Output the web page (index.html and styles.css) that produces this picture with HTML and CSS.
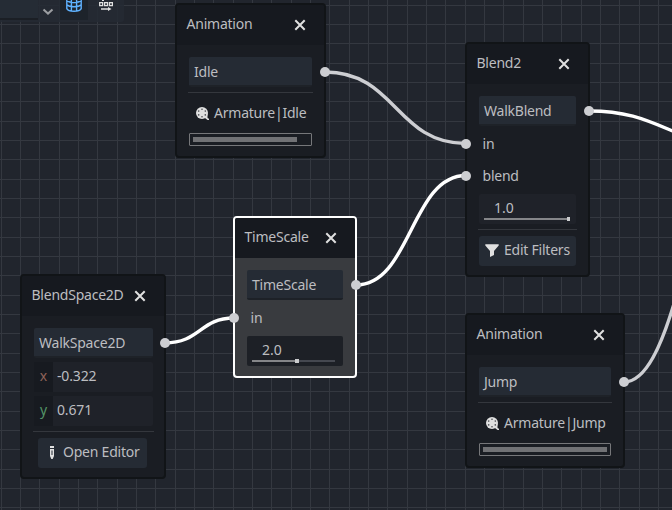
FILE: index.html
```
<!DOCTYPE html>
<html lang="en">
<head>
<meta charset="utf-8">
<title>AnimationTree</title>
<link rel="stylesheet" href="styles.css">
</head>
<body>
<svg class="defs" width="0" height="0">
  <defs>
    <symbol id="close" viewBox="0 0 12 12"><path d="M1.300 1.300 10.700 10.700M10.700 1.300 1.300 10.700" fill="none" stroke="#e0e0e0" stroke-width="2"/></symbol>
    <symbol id="reel" viewBox="0 0 13 13">
      <circle cx="6" cy="6" r="6" fill="#e0e0e0"/>
      <path d="M8.500 9.500 11.500 7v4l1.500 .8V13H11.500L9 11z" fill="#e0e0e0"/>
      <g fill="#4a4c51"><circle cx="6" cy="2.200" r=".8"/><circle cx="6" cy="9.800" r=".8"/><circle cx="2.700" cy="4.100" r=".8"/><circle cx="9.300" cy="4.100" r=".8"/><circle cx="2.700" cy="7.900" r=".8"/><circle cx="9.300" cy="7.900" r=".8"/></g>
    </symbol>
  </defs>
</svg>
<main class="graph">
  <div class="toolbar">
    <div class="path-field"></div>
    <svg class="chevron" width="12" height="8" viewBox="0 0 12 8"><path d="M1.500 1.500 6 5.600 10.500 1.500" fill="none" stroke="#9b9da1" stroke-width="2"/></svg>
    <div class="tool selected">
      <svg width="16" height="14" viewBox="0 0 16 14"><g fill="none" stroke="#5fb2ff" stroke-width="1.4"><path d="M.8 -2V8.600Q2 11.200 8 11.200T15.200 8.600V-2M5.400 -2V10.500M10.600 -2V10.500M.8 .6Q3 2.600 8 2.600T15.200 .6M.8 4.800Q3 6.800 8 6.800T15.200 4.800"/></g></svg>
    </div>
    <svg class="snap" width="14" height="12" viewBox="0 0 14 12"><g fill="none" stroke="#e0e0e0" stroke-width="1.3"><path d="M.7 2.700h2.900v2.900H.7zM5.600 2.700h2.900v2.900H5.600zM10.500 2.700h2.900v2.900h-2.900z"/></g><path d="M3 0h2v1H3zM2 8.200h7V7l3.500 2L9 11V9.800H2z" fill="#e0e0e0"/></svg>
  </div>

  <svg class="wires" width="672" height="510" viewBox="0 0 672 510">
    <g fill="none" stroke-width="3.4">
      <path stroke="#cdced2" d="M325 72C396 72 396 143.500 466 143.500"/>
      <path stroke="#fff" d="M356 285C411 285 411 175.500 466 175.500"/>
      <path stroke="#fff" d="M165 343C200 343 200 318 234 318"/>
      <path stroke="#fff" d="M589 111C635 111 653 124 690 138"/>
      <path stroke="#cdced2" d="M624 382C646 382 662 345 676 297"/>
    </g>
  </svg>

  <section class="node idle">
    <header><span>Animation</span><svg class="x"><use href="#close"/></svg></header>
    <div class="body">
      <div class="field">Idle</div>
      <hr>
      <div class="clip"><svg class="reel"><use href="#reel"/></svg>Armature|Idle</div>
      <div class="progress"><i></i></div>
    </div>
    <b class="port out"></b>
  </section>

  <section class="node blend">
    <header><span>Blend2</span><svg class="x"><use href="#close"/></svg></header>
    <div class="body">
      <div class="field">WalkBlend</div>
      <div class="slot first">in</div>
      <div class="slot">blend</div>
      <div class="spin full">1.0<div class="track"><i></i></div></div>
      <hr>
      <div class="button"><svg width="14" height="13" viewBox="0 0 14 13"><path d="M.3 .3H13.700V1.500L9 7V11L5 13V7L.3 1.500z" fill="#e0e0e0"/></svg><span>Edit Filters</span></div>
    </div>
    <b class="port in"></b><b class="port in2"></b><b class="port out"></b>
  </section>

  <section class="node scale">
    <header><span>TimeScale</span><svg class="x"><use href="#close"/></svg></header>
    <div class="body">
      <div class="field">TimeScale</div>
      <div class="slot">in</div>
      <div class="spin half">2.0<div class="track"><i></i></div></div>
    </div>
    <b class="port in"></b><b class="port out"></b>
  </section>

  <section class="node space">
    <header><span>BlendSpace2D</span><svg class="x"><use href="#close"/></svg></header>
    <div class="body">
      <div class="field">WalkSpace2D</div>
      <div class="axis"><span class="ax">x</span>-0.322</div>
      <div class="axis"><span class="ay">y</span>0.671</div>
      <hr>
      <div class="button open"><svg width="4" height="13" viewBox="0 0 4 13"><path d="M0 0h4v2H0zM0 3h4v7L2.700 13H1.300L0 10z" fill="#e0e0e0"/><path d="M1.500 4.500h1V9h-1z" fill="#252b34"/></svg><span>Open Editor</span></div>
    </div>
    <b class="port out"></b>
  </section>

  <section class="node jump">
    <header><span>Animation</span><svg class="x"><use href="#close"/></svg></header>
    <div class="body">
      <div class="field">Jump</div>
      <hr>
      <div class="clip"><svg class="reel"><use href="#reel"/></svg>Armature|Jump</div>
      <div class="progress done"><i></i></div>
    </div>
    <b class="port out"></b>
  </section>
</main>
</body>
</html>
```
FILE: styles.css
```
* { box-sizing: border-box; }
body { margin: 0; font: 14px/20px "Noto Sans", sans-serif; letter-spacing: -.23px; color: #bcbdc0; }
.defs { position: absolute; }
.graph {
  --g: #343840;
  position: relative;
  width: 672px;
  height: 510px;
  overflow: hidden;
  background-color: #21252d;
  background-image:
    linear-gradient(90deg, var(--g) 1px, transparent 1px, transparent 19px, var(--g) 19px, var(--g) 20px, transparent 20px, transparent 38px, var(--g) 38px, var(--g) 39px, transparent 39px),
    linear-gradient(var(--g) 1px, transparent 1px, transparent 19px, var(--g) 19px, var(--g) 20px, transparent 20px, transparent 38px, var(--g) 38px, var(--g) 39px, transparent 39px);
  background-size: 58px 58px;
  background-position: 1px 5px;
}
.wires { position: absolute; inset: 0; }

.toolbar { display: flex; align-items: flex-start; width: 124px; height: 22px; background: rgba(36, 42, 51, .88); border-radius: 0 0 3px 0; }
.toolbar > * { flex: none; }
.path-field { width: 38px; height: 20px; background: #252c35; border-bottom: 2px solid #1b1f25; }
.chevron { margin: 8px 0 0 4px; }
.tool { display: flex; justify-content: center; width: 28px; height: 20px; margin-left: 6px; }
.selected { background: #1d232b; }
.snap { margin: 0 0 0 11px; }

.node { position: absolute; border: 2px solid #111417; border-radius: 4px; background: #1a1d23; }
.node header { display: flex; justify-content: space-between; align-items: center; height: 40px; padding: 0 18px 3px 9.500px; background: #16191f; border-radius: 2px 2px 0 0; }
.x { flex: none; width: 12px; height: 12px; margin-top: 3px; }
.body { display: flex; flex-direction: column; padding: 12px 12px 0; }
.field { height: 30px; padding: 0 5px; line-height: 29px; background: #252b34; border-bottom: 2px solid #1e2228; border-radius: 2px; }
hr { height: 1px; margin: 5px -1px 6px; border: 0; background: #34373d; }
.clip { display: flex; align-items: center; height: 30px; gap: 5px; padding: 0 0 2px 7px; white-space: nowrap; }
.reel { flex: none; width: 13px; height: 13px; margin-top: 1px; }
.progress { height: 13px; margin-top: 4px; padding: 3px; border: 1px solid #76777a; border-radius: 1px; }
.progress i { display: block; width: 104px; height: 5px; background: #717275; }
.progress.done i { width: 124px; }
.slot { height: 32px; padding-left: 3.500px; line-height: 33px; }
.spin { height: 30px; padding: 3px 5px 0 15px; background: #1f2229; border-radius: 2px; line-height: 21px; letter-spacing: 0; }
.track { height: 2px; margin: 0 3px 0 -10px; display: flex; align-items: center; background: #858689; }
.track i { flex: none; width: 3px; height: 4px; margin-left: 83px; background: #cbccce; }
.half .track { background: linear-gradient(90deg, #858689 44px, #454850 44px); }
.half .track i { margin-left: 43px; width: 4px; }
.button { display: flex; align-items: center; height: 30px; padding: 0 6px; gap: 5px; background: #252b34; border-radius: 3px; white-space: nowrap; }
.button svg { flex: none; margin-top: -2px; }
.button span { margin-top: -3px; }
.axis { display: flex; height: 30px; margin-top: 4px; gap: 4px; background: #1f2229; border-radius: 2px; line-height: 27px; letter-spacing: -.15px; }
.axis span { width: 19px; background: #171a20; text-align: center; }
.ax { color: #8f6258; }
.ay { color: #539467; }
.port { position: absolute; width: 10px; height: 10px; border-radius: 50%; background: #cdced2; }

.idle { left: 175px; top: 3px; width: 151px; height: 155px; }
.idle .out { left: 143px; top: 62px; }
.blend { left: 465px; top: 42px; width: 125px; height: 235px; }
.blend .in { left: -6px; top: 94.500px; }
.blend .in2 { left: -6px; top: 126.500px; }
.blend .out { left: 117px; top: 62px; }
.blend .slot.first { margin-top: 1px; }
.blend .spin { margin-top: 3px; }
.scale { left: 233px; top: 216px; width: 124px; height: 162px; border-color: #fff; background: #393b3f; }
.scale .in { left: -6px; top: 95px; }
.scale .out { left: 116px; top: 62px; }
.scale .slot { margin: 1px 0 -1px; }
.scale .spin { margin-top: 4px; background: #1d2026; }
.scale .field { border-bottom-color: #1d2127; }
.space { left: 20px; top: 274px; width: 146px; height: 205px; }
.space .body { padding-right: 11px; }
.space .out { left: 138px; top: 62px; }
.button.open { align-self: flex-start; width: 109px; margin-left: 4px; padding-left: 12px; gap: 9px; }
.jump { left: 465px; top: 313px; width: 160px; height: 155px; }
.jump .out { left: 152px; top: 62px; }
```
